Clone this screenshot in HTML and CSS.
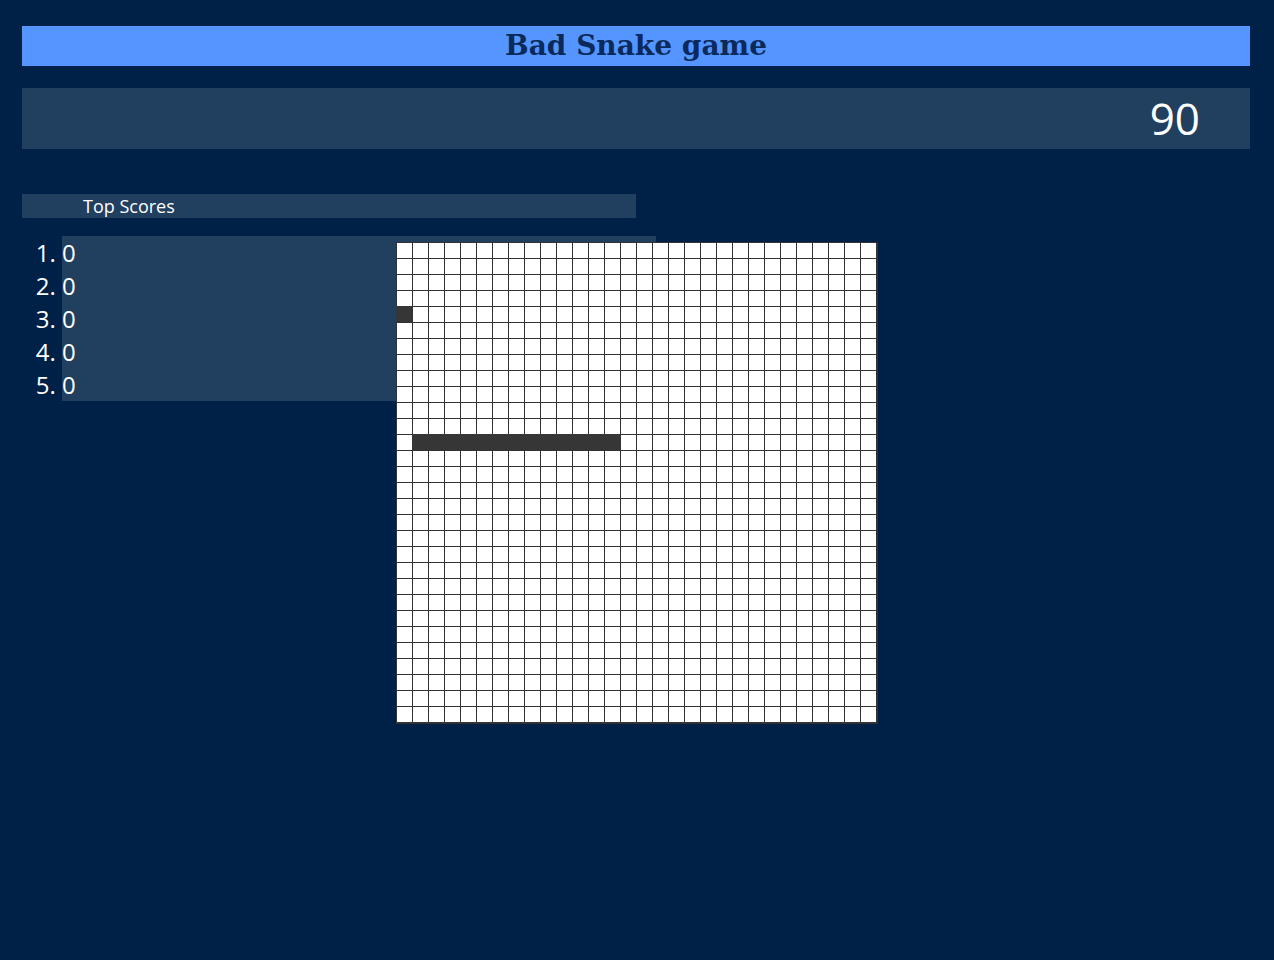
FILE: index.html
```html
<!DOCTYPE html>
<html lang="en">
<head>
<meta charset="utf-8">
<title>Bad Snake game</title>
<link rel="stylesheet" href="styles.css">
</head>
<body>
<div class="page">
  <header class="title-bar"><h1 class="title">Bad Snake game</h1></header>
  <div class="score-bar"><span class="score">90</span></div>
  <section class="scores">
    <h2 class="scores-head">Top Scores</h2>
    <ol class="scores-list">
      <li>0</li>
      <li>0</li>
      <li>0</li>
      <li>0</li>
      <li>0</li>
    </ol>
  </section>
  <div class="board">
    <div class="seg seg-a"></div>
    <div class="seg seg-b"></div>
  </div>
</div>
</body>
</html>
```

FILE: styles.css
```css
html, body {
  margin: 0;
  padding: 0;
  background: #002147;
  height: 100%;
}
body {
  font-family: "Open Sans", "DejaVu Sans", sans-serif;
  color: #ffffff;
}
.page {
  position: relative;
  padding: 26px 24px 0 22px;
}
.title-bar {
  background: #5595ff;
  height: 40px;
  display: flex;
  align-items: center;
  justify-content: center;
}
.title {
  margin: 0;
  font-family: "DejaVu Serif", "Liberation Serif", serif;
  font-weight: bold;
  font-size: 28px;
  line-height: 40px;
  color: #0b2a5c;
}
.score-bar {
  margin-top: 22px;
  background: #21405f;
  height: 61px;
  display: flex;
  align-items: center;
  justify-content: flex-end;
  padding-right: 50px;
}
.score {
  font-size: 44px;
  line-height: 61px;
}
.scores {
  margin-top: 45px;
}
.scores-head {
  margin: 0;
  width: 614px;
  height: 24px;
  background: #21405f;
  font-size: 18px;
  font-weight: normal;
  line-height: 24px;
  padding-left: 61px;
  box-sizing: border-box;
}
.scores-list {
  margin: 18px 0 0 40px;
  padding: 0;
  width: 594px;
  background: #21405f;
  font-size: 24px;
  line-height: 33px;
}
.scores-list li {
  margin: 0;
}
.board {
  position: absolute;
  top: 242px;
  left: 396px;
  display: grid;
  grid-template-columns: repeat(30, 16px);
  grid-template-rows: repeat(30, 16px);
  background-color: #ffffff;
  background-image:
    linear-gradient(to right, #333333 1px, transparent 1px),
    linear-gradient(to bottom, #333333 1px, transparent 1px);
  background-size: 16px 16px;
  border-right: 2px solid #333333;
  border-bottom: 2px solid #333333;
}
.seg {
  background: #363636;
}
.seg-a {
  grid-row: 5;
  grid-column: 1;
}
.seg-b {
  grid-row: 13;
  grid-column: 2 / 15;
}
```
